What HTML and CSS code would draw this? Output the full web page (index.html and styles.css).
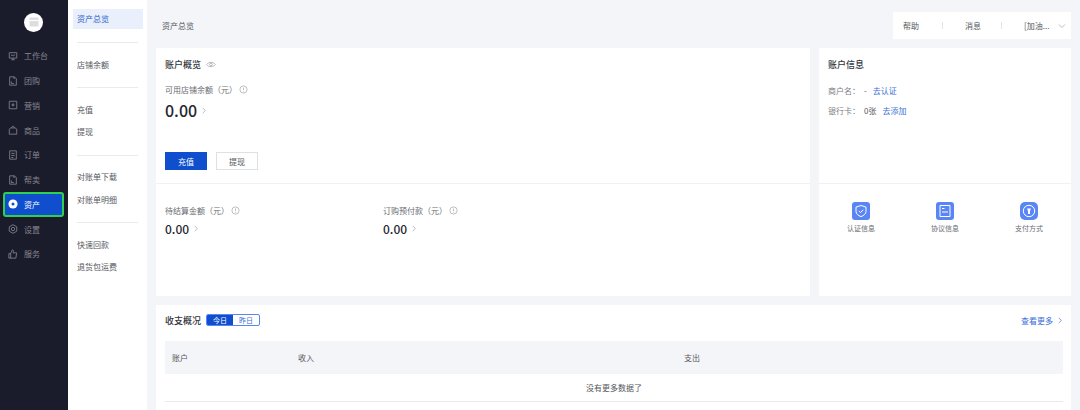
FILE: index.html
```html
<!DOCTYPE html>
<html>

<head>
  <title>资产总览</title>
  <meta name="viewport" content="width=device-width, initial-scale=1">
  <link rel="stylesheet" href="styles.css">
</head>

<body>
  <div class="page">
    <!-- 左侧深色导航 -->
    <nav class="sidebar">
      <div class="logo">
        <svg viewBox="0 0 12 12" width="12" height="12"><path d="M1.500 1.500h9v9h-9z" fill="#dedee1"/><path d="M1.500 4.500h9" stroke="#fff" stroke-width="1"/></svg>
      </div>
      <a class="side-item">
        <svg viewBox="0 0 12 12"><path d="M1.500 2h9v6.500h-9zM4 10.500h4M6 8.500v2M3.500 5.500l1.500-1 1.200 1.400 2.300-1.600"/></svg>
        工作台
      </a>
      <a class="side-item">
        <svg viewBox="0 0 12 12"><path d="M2 1h5.500L10 3v8H2zM4 6.500v2.500h3M7 1v2h1"/></svg>
        团购
      </a>
      <a class="side-item">
        <svg viewBox="0 0 12 12"><path d="M1.500 1.500h9v9h-9zM5 4.800h2v2h-2z"/></svg>
        营销
      </a>
      <a class="side-item">
        <svg viewBox="0 0 12 12"><path d="M1.500 5l2-1.500h5l2 1.500v6h-9zM4.200 3.500C4.200 1 7.800 1 7.800 3.500"/></svg>
        商品
      </a>
      <a class="side-item">
        <svg viewBox="0 0 12 12"><path d="M2 1h8v10H2zM4 4h4M4 6.500h4M4 9h2.500"/></svg>
        订单
      </a>
      <a class="side-item">
        <svg viewBox="0 0 12 12"><path d="M2 1h5.500L10 3v8H2zM4 6.500v2.500h3M7 1v2h1"/></svg>
        帮卖
      </a>
      <a class="side-item active">
        <svg viewBox="0 0 12 12"><circle cx="6" cy="6" r="5.500" fill="#fff" stroke="none"/><circle cx="6" cy="6" r="1.800" fill="#0f4fce" stroke="none"/></svg>
        资产
      </a>
      <a class="side-item">
        <svg viewBox="0 0 12 12"><path d="M6 .8l4.500 2.600v5.200L6 11.200 1.500 8.600V3.400z"/><circle cx="6" cy="6" r="2"/></svg>
        设置
      </a>
      <a class="side-item">
        <svg viewBox="0 0 12 12"><path d="M1 5.500h2.200V11H1zM3.200 5.500l2-4.500c1.200 0 1.600 1 1.300 2L6 4.600h4.400l-1 6.400H3.200"/></svg>
        服务
      </a>
    </nav>

    <!-- 二级菜单 -->
    <aside class="subnav">
      <div class="sub-group">
        <a class="sub-item current">资产总览</a>
      </div>
      <div class="sub-group">
        <a class="sub-item">店铺余额</a>
      </div>
      <div class="sub-group">
        <a class="sub-item">充值</a>
        <a class="sub-item">提现</a>
      </div>
      <div class="sub-group">
        <a class="sub-item">对账单下载</a>
        <a class="sub-item">对账单明细</a>
      </div>
      <div class="sub-group">
        <a class="sub-item">快速回款</a>
        <a class="sub-item">退货包运费</a>
      </div>
    </aside>

    <main class="main">
      <header class="topbar">
        <div class="crumb">资产总览</div>
        <div class="tools">
          <span class="tool tool-help">帮助</span>
          <span class="tool-line"></span>
          <span class="tool tool-msg">消息</span>
          <span class="tool-line"></span>
          <span class="tool tool-shop">[加油...</span>
          <svg class="tool-arrow" viewBox="0 0 8 8"><path d="M1 2.500l3 3 3-3"/></svg>
        </div>
      </header>

      <div class="cards">
        <!-- 账户概览 -->
        <section class="card">
          <div class="card-top">
            <h3 class="card-title">账户概览
              <svg class="eye" viewBox="0 0 12 8"><path d="M.7 4C3 .6 9 .6 11.300 4 9 7.400 3 7.400.7 4z"/><circle cx="6" cy="4" r="1.600"/></svg>
            </h3>
            <div class="label">可用店铺余额（元）
              <svg class="tip" viewBox="0 0 10 10"><circle cx="5" cy="5" r="4"/><path d="M5 2.800v2.800M5 6.600v.8"/></svg>
            </div>
            <div class="amount big">0.00
              <svg class="arrow" viewBox="0 0 6 10"><path d="M1 1l4 4-4 4"/></svg>
            </div>
            <div class="btns">
              <button class="btn primary">充值</button>
              <button class="btn">提现</button>
            </div>
          </div>
          <div class="card-bottom balances">
            <div class="balance">
              <div class="label">待结算金额（元）
                <svg class="tip" viewBox="0 0 10 10"><circle cx="5" cy="5" r="4"/><path d="M5 2.800v2.800M5 6.600v.8"/></svg>
              </div>
              <div class="amount">0.00
                <svg class="arrow" viewBox="0 0 6 10"><path d="M1 1l4 4-4 4"/></svg>
              </div>
            </div>
            <div class="balance">
              <div class="label">订购预付款（元）
                <svg class="tip" viewBox="0 0 10 10"><circle cx="5" cy="5" r="4"/><path d="M5 2.800v2.800M5 6.600v.8"/></svg>
              </div>
              <div class="amount">0.00
                <svg class="arrow" viewBox="0 0 6 10"><path d="M1 1l4 4-4 4"/></svg>
              </div>
            </div>
          </div>
        </section>

        <!-- 账户信息 -->
        <section class="card">
          <div class="card-top">
            <h3 class="card-title">账户信息</h3>
            <div class="info-row"><span class="info-key">商户名：</span><span>-</span><a class="link">去认证</a></div>
            <div class="info-row"><span class="info-key">银行卡：</span><span>0张</span><a class="link">去添加</a></div>
          </div>
          <div class="card-bottom shortcuts">
            <div class="shortcut">
              <span class="shortcut-icon">
                <svg viewBox="0 0 18 18"><path d="M9 3.500l5 1.600v4.200c0 2.600-2.200 4.300-5 5.300-2.800-1-5-2.700-5-5.300V5.100z"/><path d="M6.800 9l1.700 1.500 2.800-2.700"/></svg>
              </span>
              认证信息
            </div>
            <div class="shortcut">
              <span class="shortcut-icon">
                <svg viewBox="0 0 18 18"><path d="M4 3.500h10v11H4zM6 6.500h2.500M6 10h6"/></svg>
              </span>
              协议信息
            </div>
            <div class="shortcut">
              <span class="shortcut-icon round">
                <svg viewBox="0 0 18 18"><circle cx="9" cy="9" r="5.700"/><path class="solid" d="M7 6.500h4l-1 2.500v3H8V9z"/></svg>
              </span>
              支付方式
            </div>
          </div>
        </section>
      </div>

      <!-- 收支概况 -->
      <section class="card flow">
        <div class="flow-head">
          <h3 class="card-title">收支概况</h3>
          <div class="tabs">
            <span class="tab on">今日</span>
            <span class="tab">昨日</span>
          </div>
          <a class="more">查看更多
            <svg viewBox="0 0 6 10"><path d="M1 1l4 4-4 4"/></svg>
          </a>
        </div>
        <div class="flow-table">
          <div class="flow-row">
            <span>账户</span>
            <span>收入</span>
            <span>支出</span>
          </div>
          <div class="flow-empty">没有更多数据了</div>
        </div>
      </section>
    </main>
  </div>
</body>

</html>
```

FILE: styles.css
```css
* {
  box-sizing: border-box;
}

body {
  margin: 0;
  font-family: "Noto Sans CJK SC", "Noto Sans", sans-serif;
  font-size: 8px;
  color: #55575e;
}

.page {
  display: flex;
  width: 1080px;
  height: 410px;
  overflow: hidden;
  background: #f4f5f8;
}

/* 左侧导航 */
.sidebar {
  width: 68px;
  flex-shrink: 0;
  padding: 12.5px 0 0 3px;
  background: #1b1c2b;
}

.logo {
  display: flex;
  align-items: center;
  justify-content: center;
  width: 19px;
  height: 19px;
  margin: 0 0 12px 21px;
  border-radius: 50%;
  background: #fff;
}

.side-item {
  display: flex;
  align-items: center;
  gap: 6px;
  width: 61px;
  height: 24.75px;
  padding-left: 3px;
  border: 2px solid transparent;
  border-radius: 3px;
  color: #85868f;
}

.side-item svg {
  width: 10px;
  height: 10px;
  fill: none;
  stroke: #85868f;
  stroke-width: 1;
}

.side-item.active {
  background: #0f4fce;
  border-color: #2fd04e;
  color: #fff;
}

/* 二级菜单 */
.subnav {
  width: 79px;
  flex-shrink: 0;
  padding: 9px 4px 0 5px;
  background: #fff;
}

.sub-group {
  margin: 0 5px 10.5px 4px;
  padding-bottom: 11px;
  border-bottom: 1px solid #e9eaee;
}

.sub-group:last-child {
  border-bottom: none;
}

.sub-item {
  display: block;
  height: 22.5px;
  line-height: 22.5px;
  color: #55575e;
}

.sub-item.current {
  height: 20px;
  margin: 0 -5px 2.25px -4px;
  padding-left: 4px;
  line-height: 20px;
  background: #e9effb;
  color: #2b62d0;
}

/* 右侧内容 */
.main {
  flex: 1;
  padding: 12px 9px 0;
}

.topbar {
  display: flex;
  align-items: center;
  justify-content: space-between;
  height: 27px;
  margin-bottom: 9px;
}

.crumb {
  padding-left: 6px;
}

.tools {
  display: flex;
  align-items: center;
  width: 178px;
  height: 27px;
  background: #fff;
}

.tool-help {
  margin: 0 23px 0 10px;
}

.tool-msg {
  margin: 0 20px 0 22px;
}

.tool-shop {
  margin-left: 22px;
  white-space: nowrap;
}

.tool-line {
  width: 1px;
  height: 7px;
  background: #e3e4e8;
}

.tool-arrow {
  width: 8px;
  height: 8px;
  margin-left: 9px;
  fill: none;
  stroke: #a9abb2;
  stroke-width: 0.8;
}

.cards {
  display: grid;
  grid-template-columns: 654px 252px;
  gap: 9px;
  height: 248px;
  margin-bottom: 9px;
}

.card {
  display: flex;
  flex-direction: column;
  background: #fff;
}

.card-top {
  height: 136px;
  padding: 9px 9px 0;
  border-bottom: 1px solid #f0f1f4;
}

.card-title {
  display: flex;
  align-items: center;
  gap: 5px;
  height: 14px;
  margin: 0;
  font-size: 9px;
  font-weight: 500;
  color: #33353b;
}

.eye {
  width: 10px;
  height: 7px;
  fill: none;
  stroke: #9a9ca3;
  stroke-width: 0.8;
}

.label {
  display: flex;
  align-items: center;
  gap: 1.5px;
  height: 12px;
  color: #6a6c73;
}

.card-top .label {
  margin-top: 12px;
}

.tip {
  width: 9px;
  height: 9px;
  fill: none;
  stroke: #a4a6ad;
  stroke-width: 0.8;
}

.amount {
  display: flex;
  align-items: center;
  gap: 5px;
  height: 16px;
  margin-top: 4px;
  font-size: 12px;
  font-weight: 500;
  color: #25272e;
}

.amount.big {
  height: 22px;
  margin-top: 4px;
  font-size: 16px;
}

.arrow {
  width: 4px;
  height: 7px;
  fill: none;
  stroke: #9a9ca3;
  stroke-width: 1;
}

.btns {
  display: flex;
  gap: 9px;
  margin-top: 31px;
}

.btn {
  width: 42px;
  height: 18px;
  padding: 0;
  border: 1px solid #dfe0e4;
  background: #fff;
  font-family: inherit;
  font-size: 8px;
  color: #55575e;
}

.btn.primary {
  background: #0f4fce;
  border-color: #0f4fce;
  color: #fff;
}

.card-bottom {
  flex: 1;
}

.balances {
  display: flex;
  padding: 20px 9px 0;
}

.balance {
  width: 218px;
}

.info-row {
  display: flex;
  align-items: center;
  height: 12px;
  margin-top: 8.5px;
  color: #55575e;
}

.card-title + .info-row {
  margin-top: 13px;
}

.info-key {
  width: 36px;
  color: #7a7c83;
}

.link {
  margin-left: 6px;
  color: #3a6fd8;
}

.shortcuts {
  display: grid;
  grid-template-columns: repeat(3, 1fr);
  padding-top: 18px;
}

.shortcut {
  display: flex;
  flex-direction: column;
  align-items: center;
  gap: 3px;
  font-size: 7px;
  color: #6a6c73;
}

.shortcut-icon {
  display: block;
  width: 18px;
  height: 18px;
  border-radius: 3px;
  background: #5a86f5;
}

.shortcut-icon.round {
  border-radius: 5px;
}

.shortcut-icon svg {
  display: block;
  fill: none;
  stroke: #fff;
  stroke-width: 1;
}

.shortcut-icon .solid {
  fill: #fff;
  stroke: none;
}

.flow {
  height: 105px;
  padding: 9px 8px 0 9px;
}

.flow-head {
  display: flex;
  align-items: center;
  height: 12px;
  margin-bottom: 15px;
}

.tabs {
  display: flex;
  width: 54px;
  height: 12px;
  margin-left: 5px;
  border: 1px solid #5a86f5;
  border-radius: 2px;
  overflow: hidden;
}

.tab {
  flex: 1;
  font-size: 7px;
  line-height: 10px;
  text-align: center;
  color: #3a6fd8;
}

.tab.on {
  background: #0f4fce;
  color: #fff;
}

.more {
  display: flex;
  align-items: center;
  gap: 5px;
  margin-left: auto;
  margin-right: 1px;
  color: #3a6fd8;
}

.more svg {
  width: 4px;
  height: 7px;
  fill: none;
  stroke: #3a6fd8;
  stroke-width: 1;
}

.flow-row {
  display: grid;
  grid-template-columns: 126px 386px 1fr;
  align-items: center;
  height: 32.5px;
  padding-left: 7px;
  background: #f4f5f8;
}

.flow-empty {
  height: 28px;
  line-height: 27px;
  text-align: center;
  border-bottom: 1px solid #e9eaee;
}
```
